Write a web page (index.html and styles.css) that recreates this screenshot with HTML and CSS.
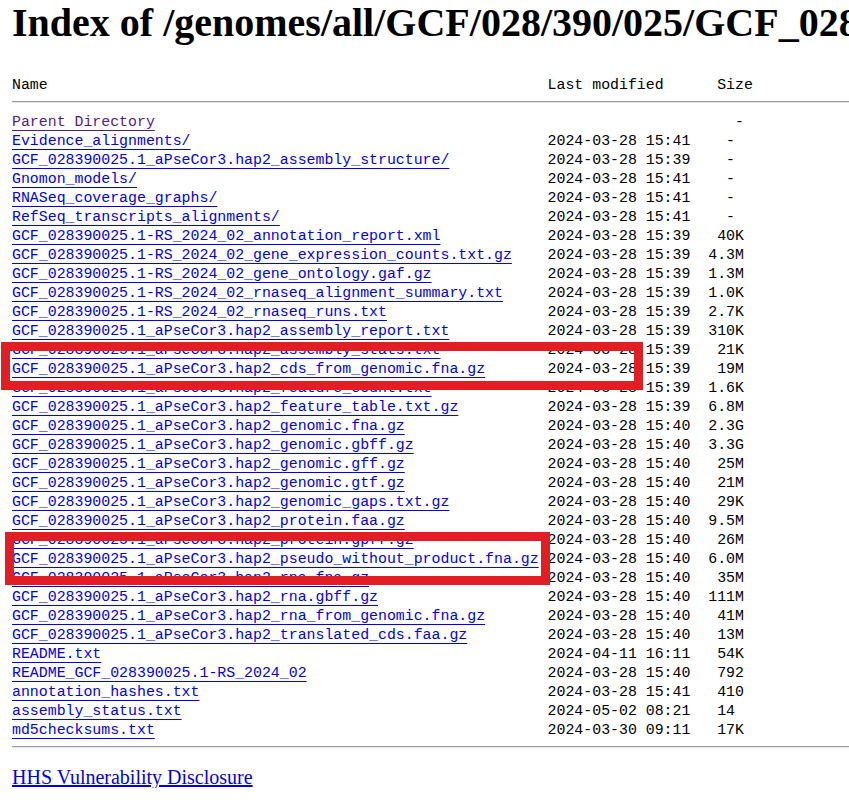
FILE: index.html
```html
<!DOCTYPE html>
<html>
<head>
<meta charset="utf-8">
<title>Index of /genomes/all/GCF/028/390/025/GCF_028390025.1_aPseCor3.hap2</title>
<link rel="stylesheet" href="styles.css">
</head>
<body>
<h1 class="title">Index of /genomes/all/GCF/028/390/025/GCF_028390025.1_aPseCor3.hap2</h1>
<div class="listing">
  <div class="row head"><span class="name">Name</span><span class="date">Last modified</span><span class="size size-head">Size</span></div>
  <hr class="rule">
  <div class="row"><span class="name"><a class="visited" href="#">Parent Directory</a></span><span class="date"></span><span class="size">-</span></div>
  <div class="row"><span class="name"><a href="#">Evidence_alignments/</a></span><span class="date">2024-03-28 15:41</span><span class="size">- </span></div>
  <div class="row"><span class="name"><a href="#">GCF_028390025.1_aPseCor3.hap2_assembly_structure/</a></span><span class="date">2024-03-28 15:39</span><span class="size">- </span></div>
  <div class="row"><span class="name"><a href="#">Gnomon_models/</a></span><span class="date">2024-03-28 15:41</span><span class="size">- </span></div>
  <div class="row"><span class="name"><a href="#">RNASeq_coverage_graphs/</a></span><span class="date">2024-03-28 15:41</span><span class="size">- </span></div>
  <div class="row"><span class="name"><a href="#">RefSeq_transcripts_alignments/</a></span><span class="date">2024-03-28 15:41</span><span class="size">- </span></div>
  <div class="row"><span class="name"><a href="#">GCF_028390025.1-RS_2024_02_annotation_report.xml</a></span><span class="date">2024-03-28 15:39</span><span class="size">40K</span></div>
  <div class="row"><span class="name"><a href="#">GCF_028390025.1-RS_2024_02_gene_expression_counts.txt.gz</a></span><span class="date">2024-03-28 15:39</span><span class="size">4.3M</span></div>
  <div class="row"><span class="name"><a href="#">GCF_028390025.1-RS_2024_02_gene_ontology.gaf.gz</a></span><span class="date">2024-03-28 15:39</span><span class="size">1.3M</span></div>
  <div class="row"><span class="name"><a href="#">GCF_028390025.1-RS_2024_02_rnaseq_alignment_summary.txt</a></span><span class="date">2024-03-28 15:39</span><span class="size">1.0K</span></div>
  <div class="row"><span class="name"><a href="#">GCF_028390025.1-RS_2024_02_rnaseq_runs.txt</a></span><span class="date">2024-03-28 15:39</span><span class="size">2.7K</span></div>
  <div class="row"><span class="name"><a href="#">GCF_028390025.1_aPseCor3.hap2_assembly_report.txt</a></span><span class="date">2024-03-28 15:39</span><span class="size">310K</span></div>
  <div class="row"><span class="name"><a href="#">GCF_028390025.1_aPseCor3.hap2_assembly_stats.txt</a></span><span class="date">2024-03-28 15:39</span><span class="size">21K</span></div>
  <div class="row"><span class="name"><a href="#">GCF_028390025.1_aPseCor3.hap2_cds_from_genomic.fna.gz</a></span><span class="date">2024-03-28 15:39</span><span class="size">19M</span></div>
  <div class="row"><span class="name"><a href="#">GCF_028390025.1_aPseCor3.hap2_feature_count.txt</a></span><span class="date">2024-03-28 15:39</span><span class="size">1.6K</span></div>
  <div class="row"><span class="name"><a href="#">GCF_028390025.1_aPseCor3.hap2_feature_table.txt.gz</a></span><span class="date">2024-03-28 15:39</span><span class="size">6.8M</span></div>
  <div class="row"><span class="name"><a href="#">GCF_028390025.1_aPseCor3.hap2_genomic.fna.gz</a></span><span class="date">2024-03-28 15:40</span><span class="size">2.3G</span></div>
  <div class="row"><span class="name"><a href="#">GCF_028390025.1_aPseCor3.hap2_genomic.gbff.gz</a></span><span class="date">2024-03-28 15:40</span><span class="size">3.3G</span></div>
  <div class="row"><span class="name"><a href="#">GCF_028390025.1_aPseCor3.hap2_genomic.gff.gz</a></span><span class="date">2024-03-28 15:40</span><span class="size">25M</span></div>
  <div class="row"><span class="name"><a href="#">GCF_028390025.1_aPseCor3.hap2_genomic.gtf.gz</a></span><span class="date">2024-03-28 15:40</span><span class="size">21M</span></div>
  <div class="row"><span class="name"><a href="#">GCF_028390025.1_aPseCor3.hap2_genomic_gaps.txt.gz</a></span><span class="date">2024-03-28 15:40</span><span class="size">29K</span></div>
  <div class="row"><span class="name"><a href="#">GCF_028390025.1_aPseCor3.hap2_protein.faa.gz</a></span><span class="date">2024-03-28 15:40</span><span class="size">9.5M</span></div>
  <div class="row"><span class="name"><a href="#">GCF_028390025.1_aPseCor3.hap2_protein.gpff.gz</a></span><span class="date">2024-03-28 15:40</span><span class="size">26M</span></div>
  <div class="row"><span class="name"><a href="#">GCF_028390025.1_aPseCor3.hap2_pseudo_without_product.fna.gz</a></span><span class="date">2024-03-28 15:40</span><span class="size">6.0M</span></div>
  <div class="row"><span class="name"><a href="#">GCF_028390025.1_aPseCor3.hap2_rna.fna.gz</a></span><span class="date">2024-03-28 15:40</span><span class="size">35M</span></div>
  <div class="row"><span class="name"><a href="#">GCF_028390025.1_aPseCor3.hap2_rna.gbff.gz</a></span><span class="date">2024-03-28 15:40</span><span class="size">111M</span></div>
  <div class="row"><span class="name"><a href="#">GCF_028390025.1_aPseCor3.hap2_rna_from_genomic.fna.gz</a></span><span class="date">2024-03-28 15:40</span><span class="size">41M</span></div>
  <div class="row"><span class="name"><a href="#">GCF_028390025.1_aPseCor3.hap2_translated_cds.faa.gz</a></span><span class="date">2024-03-28 15:40</span><span class="size">13M</span></div>
  <div class="row"><span class="name"><a href="#">README.txt</a></span><span class="date">2024-04-11 16:11</span><span class="size">54K</span></div>
  <div class="row"><span class="name"><a href="#">README_GCF_028390025.1-RS_2024_02</a></span><span class="date">2024-03-28 15:40</span><span class="size">792</span></div>
  <div class="row"><span class="name"><a href="#">annotation_hashes.txt</a></span><span class="date">2024-03-28 15:41</span><span class="size">410</span></div>
  <div class="row"><span class="name"><a href="#">assembly_status.txt</a></span><span class="date">2024-05-02 08:21</span><span class="size">14 </span></div>
  <div class="row"><span class="name"><a href="#">md5checksums.txt</a></span><span class="date">2024-03-30 09:11</span><span class="size">17K</span></div>
  <hr class="rule rule-bottom">
</div>
<p class="footer"><a href="#">HHS Vulnerability Disclosure</a></p>

<div class="mark mark-one"></div>
<div class="mark mark-two"></div>
</body>
</html>
```

FILE: styles.css
```css
html, body {
  background: #ffffff;
}

body {
  margin: 0;
  padding: 0 0 0 12px;
  color: #000000;
  font-family: "Liberation Serif", "Times New Roman", serif;
}

.title {
  margin: 0;
  font-size: 40px;
  line-height: 46px;
  font-weight: bold;
  white-space: nowrap;
  overflow: hidden;
}

.listing {
  margin-top: 30px;
  font-family: "Liberation Mono", "Courier New", monospace;
  font-size: 14.88px;
  line-height: 19px;
}

.row {
  display: grid;
  grid-template-columns: 60ch 16ch 6ch;
  white-space: pre;
}

.size {
  text-align: right;
}

.size-head {
  text-align: left;
  padding-left: 3ch;
}

.listing a {
  color: #0000ee;
  text-decoration: underline;
  text-underline-offset: 4px;
}

.listing a.visited {
  color: #551a8b;
}

.rule {
  height: 0;
  margin: 6px 0 10px 0;
  border: none;
  border-top: 1px solid #9a9a9a;
  border-bottom: 1px solid #e6e6e6;
}

.rule-bottom {
  margin: 6px 0 0 0;
}

.footer {
  margin: 18px 0 0 0;
  font-size: 20px;
  line-height: 22px;
}

.footer a {
  color: #0000ee;
  text-decoration: underline;
}

.mark {
  position: absolute;
  box-sizing: border-box;
  border: 9px solid #e21d24;
}

.mark-one {
  left: 1px;
  top: 342px;
  width: 642px;
  height: 48px;
}

.mark-two {
  left: 5px;
  top: 532px;
  width: 545px;
  height: 53px;
}
```
